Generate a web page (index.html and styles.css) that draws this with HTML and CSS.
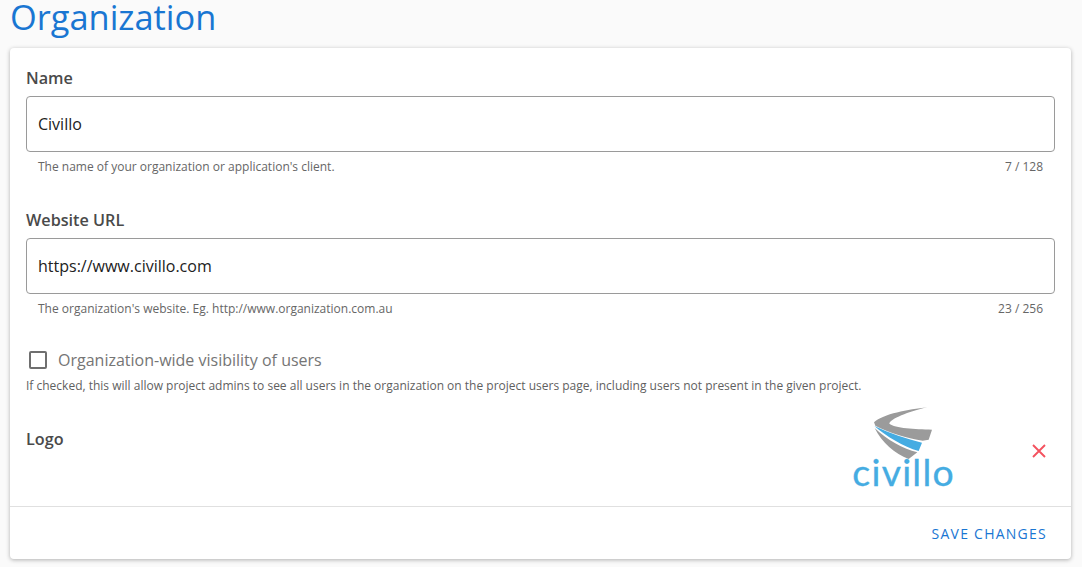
FILE: index.html
```html
<!DOCTYPE html>
<html lang="en">
<head>
<meta charset="utf-8">
<title>Organization</title>
<link rel="stylesheet" href="styles.css">
</head>
<body>
<main class="page">
  <h1 class="title">Organization</h1>
  <form class="card">
    <div class="card-body">
      <div class="field">
        <label class="field-label">Name</label>
        <div class="input">Civillo</div>
        <div class="hint"><span>The name of your organization or application's client.</span><span>7 / 128</span></div>
      </div>
      <div class="field">
        <label class="field-label">Website URL</label>
        <div class="input">https://www.civillo.com</div>
        <div class="hint"><span>The organization's website. Eg. http://www.organization.com.au</span><span>23 / 256</span></div>
      </div>
      <div class="check-row">
        <span class="checkbox"></span>
        <span class="check-label">Organization-wide visibility of users</span>
      </div>
      <p class="check-help">If checked, this will allow project admins to see all users in the organization on the project users page, including users not present in the given project.</p>
      <div class="logo-row">
        <span class="field-label">Logo</span>
        <div class="logo-side">
          <svg class="logo" viewBox="30 15 318 300" aria-label="civillo logo">
            <path fill="#9b9b9b" d="M262 25C205 31 130 45 102 70L106 80C150 103 205 118 248 125L266 122L276 92C225 90 165 88 148 74C150 60 205 38 262 25Z"/>
            <path fill="#45ace2" d="M103 81C150 104 200 120 246 131L236 156C190 144 140 112 103 81Z"/>
            <path fill="#9b9b9b" d="M104 87C140 122 190 150 232 160L206 180C165 165 125 130 104 87Z"/>
            <text class="logo-text" x="37" y="262" textLength="304">civillo</text>
          </svg>
          <svg class="remove" viewBox="0 0 14 14" aria-label="Remove logo">
            <path d="M1 1L13 13M13 1L1 13"/>
          </svg>
        </div>
      </div>
    </div>
    <div class="card-footer">
      <button class="save" type="button">SAVE CHANGES</button>
    </div>
  </form>
</main>
</body>
</html>
```
FILE: styles.css
```css
* { box-sizing: border-box; }
html, body { margin: 0; height: 100%; overflow: hidden; }
body {
  background: #fafafa;
  font-family: "Open Sans", "Liberation Sans", sans-serif;
  color: #4a4a4a;
}
.page { padding: 0 11px 0 10px; }
.title {
  margin: 0;
  height: 48px;
  font-size: 34.4px;
  line-height: 33px;
  font-weight: 400;
  color: #1976d2;
}
.card {
  background: #fff;
  border-radius: 4px;
  height: 511px;
  box-shadow: 0 1px 4px rgba(0,0,0,.3);
  display: flex;
  flex-direction: column;
}
.card-body {
  flex: 1;
  min-height: 0;
  padding: 19px 16px 0;
  display: flex;
  flex-direction: column;
}
.field { margin-bottom: 33px; }
.field:nth-child(2) { margin-bottom: 30px; }
.field-label {
  display: block;
  font-size: 16.2px;
  line-height: 22px;
  font-weight: 600;
  color: #4a4a4a;
}
.input {
  margin-top: 7px;
  height: 56px;
  border: 1px solid #9a9a9a;
  border-radius: 4px;
  padding: 0 11px;
  font-size: 16px;
  line-height: 54px;
  color: #212121;
}
.hint {
  display: flex;
  justify-content: space-between;
  padding: 6px 12px 0;
  font-size: 12px;
  line-height: 18px;
  color: #666;
}
.check-row {
  display: flex;
  align-items: center;
  gap: 11px;
  padding-left: 3px;
  height: 24px;
}
.checkbox {
  width: 18px;
  height: 18px;
  border: 2px solid #6f6f6f;
  border-radius: 2px;
}
.check-label {
  font-size: 16px;
  color: #757575;
}
.check-help {
  margin: 5px 0 0;
  font-size: 12px;
  line-height: 18px;
  color: #5f5f5f;
}
.logo-row {
  display: flex;
  justify-content: space-between;
  align-items: flex-start;
  margin-top: 9px;
}
.logo-row .field-label { margin-top: 24px; }
.logo-side {
  display: flex;
  align-items: flex-start;
  gap: 76px;
  padding-right: 9px;
}
.logo { width: 106px; height: 100px; display: block; }
.logo-text {
  font-family: Lato, "Open Sans", sans-serif;
  font-size: 112px;
  fill: #45ace2;
  stroke: #45ace2;
  stroke-width: 1;
}
.remove {
  width: 14px;
  height: 14px;
  margin-top: 40px;
  fill: none;
  stroke: #f4525f;
  stroke-width: 1.9;
}
.card-footer {
  height: 53px;
  border-top: 1px solid #e0e0e0;
  display: flex;
  justify-content: flex-end;
  align-items: center;
  padding-right: 24px;
}
.save {
  background: none;
  border: 0;
  padding: 0;
  font-family: inherit;
  font-size: 14px;
  letter-spacing: 1.25px;
  color: #1976d2;
}
```
